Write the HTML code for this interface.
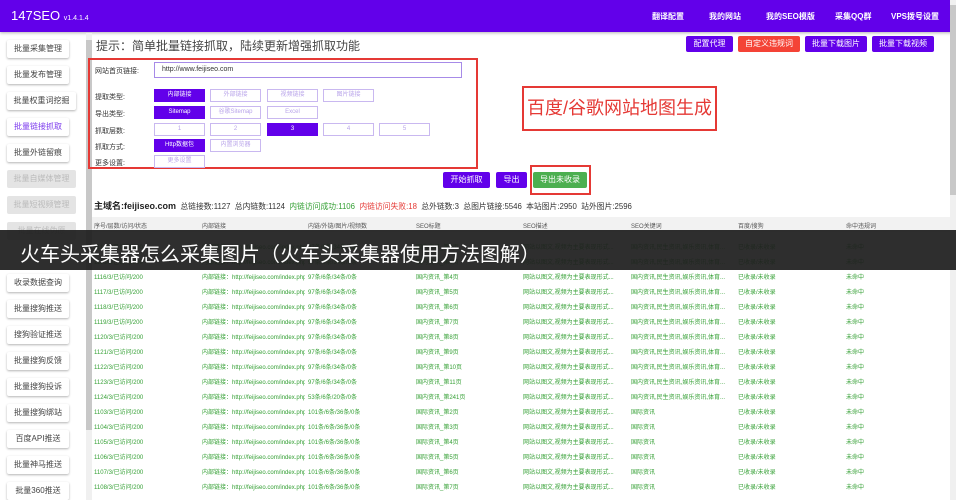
<!DOCTYPE html>
<html><head><meta charset="utf-8"><style>
*{margin:0;padding:0;box-sizing:border-box}
body{width:956px;height:500px;overflow:hidden;background:#fff;font-family:"Liberation Sans","Noto Sans CJK SC",sans-serif;position:relative;font-size:8px;color:#333}
.a{position:absolute}
.hdr{left:0;top:0;width:956px;height:32px;background:#6200ea;box-shadow:0 1px 3px rgba(0,0,0,.3)}
.nav{top:11px;color:#fff;font-size:8px;font-weight:bold}
.sb{left:7px;width:62px;height:18px;background:#fff;box-shadow:0 1px 2px rgba(0,0,0,.3);border-radius:2px;text-align:center;line-height:18px;font-size:8px;color:#444}
.sb.d{background:#e4e4e4;color:#bbb;box-shadow:none}
.tb{top:36px;height:16px;background:#6200ea;color:#fff;font-size:8px;text-align:center;line-height:16px;border-radius:2px}
.lb{left:95px;font-size:7px;color:#333}
.ob{height:13px;width:51px;border:1px solid #c9b8f0;color:#b9a4ea;font-size:6px;text-align:center;line-height:11px;background:#fff}
.ob.on{background:#6200ea;color:#fff;border-color:#6200ea}
.row{left:94px;width:850px;font-size:6px;color:#35a035;height:15px;line-height:15px;white-space:nowrap}
.row span{position:absolute;top:0;max-width:100px;overflow:hidden}
</style></head><body>
<div class="a hdr"></div>
<div class="a" style="left:11px;top:8px;color:#fff;font-size:13px">147SEO <span style="font-size:7px">v1.4.1.4</span></div>
<div class="a nav" style="left:652px">翻译配置</div>
<div class="a nav" style="left:709px">我的网站</div>
<div class="a nav" style="left:766px">我的SEO模版</div>
<div class="a nav" style="left:835px">采集QQ群</div>
<div class="a nav" style="left:891px">VPS拨号设置</div>

<div class="a" style="left:86px;top:33px;width:6px;height:467px;background:#f0f0f0"></div>
<div class="a" style="left:86px;top:40px;width:6px;height:390px;background:#c8c8c8"></div>
<div class="a" style="left:950px;top:0;width:6px;height:500px;background:#f0f0f0"></div>
<div class="a" style="left:950px;top:5px;width:6px;height:190px;background:#c8c8c8"></div>

<div class="a sb" style="top:40px">批量采集管理</div>
<div class="a sb" style="top:66px">批量发布管理</div>
<div class="a sb" style="top:92px;width:69px">批量权重词挖掘</div>
<div class="a sb" style="top:118px;color:#7c3aed">批量链接抓取</div>
<div class="a sb" style="top:144px">批量外链留痕</div>
<div class="a sb d" style="top:170px;width:69px">批量自媒体管理</div>
<div class="a sb d" style="top:196px;width:69px">批量短视频管理</div>
<div class="a sb d" style="top:222px;width:69px">批量在线伪原</div>
<div class="a sb" style="top:274px">收录数据查询</div>
<div class="a sb" style="top:300px">批量搜狗推送</div>
<div class="a sb" style="top:326px">搜狗验证推送</div>
<div class="a sb" style="top:352px">批量搜狗反馈</div>
<div class="a sb" style="top:378px">批量搜狗投诉</div>
<div class="a sb" style="top:404px">批量搜狗绑站</div>
<div class="a sb" style="top:430px">百度API推送</div>
<div class="a sb" style="top:456px">批量神马推送</div>
<div class="a sb" style="top:482px">批量360推送</div>

<div class="a" style="left:96px;top:37px;font-size:12px;color:#444">提示：简单批量链接抓取，陆续更新增强抓取功能</div>
<div class="a tb" style="left:686px;width:47px">配置代理</div>
<div class="a tb" style="left:738px;width:62px;background:#f44336">自定义违规词</div>
<div class="a tb" style="left:805px;width:62px">批量下载图片</div>
<div class="a tb" style="left:872px;width:62px">批量下载视频</div>

<div class="a" style="left:88px;top:58px;width:390px;height:111px;border:2px solid #e53935"></div>
<div class="a lb" style="top:66px">网站首页链接:</div>
<div class="a" style="left:154px;top:62px;width:308px;height:16px;border:1px solid #a78be8;font-size:7px;line-height:14px;padding-left:7px">http://www.feijiseo.com</div>
<div class="a lb" style="top:92px">提取类型:</div>
<div class="a lb" style="top:109px">导出类型:</div>
<div class="a lb" style="top:126px">抓取层数:</div>
<div class="a lb" style="top:142px">抓取方式:</div>
<div class="a lb" style="top:158px">更多设置:</div>
<div class="a ob on" style="left:154px;top:89px">内部链接</div>
<div class="a ob" style="left:210px;top:89px">外部链接</div>
<div class="a ob" style="left:267px;top:89px">视频链接</div>
<div class="a ob" style="left:323px;top:89px">图片链接</div>
<div class="a ob on" style="left:154px;top:106px">Sitemap</div>
<div class="a ob" style="left:210px;top:106px">谷歌Sitemap</div>
<div class="a ob" style="left:267px;top:106px">Excel</div>
<div class="a ob" style="left:154px;top:123px">1</div>
<div class="a ob" style="left:210px;top:123px">2</div>
<div class="a ob on" style="left:267px;top:123px">3</div>
<div class="a ob" style="left:323px;top:123px">4</div>
<div class="a ob" style="left:379px;top:123px">5</div>
<div class="a ob on" style="left:154px;top:139px">Http数据包</div>
<div class="a ob" style="left:210px;top:139px">内置浏览器</div>
<div class="a ob" style="left:154px;top:155px">更多设置</div>

<div class="a" style="left:522px;top:86px;width:195px;height:45px;border:2px solid #e53935;color:#e53935;font-size:18px;text-align:center;line-height:41px">百度/谷歌网站地图生成</div>

<div class="a tb" style="left:443px;top:172px;width:47px">开始抓取</div>
<div class="a tb" style="left:496px;top:172px;width:31px">导出</div>
<div class="a" style="left:530px;top:165px;width:61px;height:30px;border:2px solid #e53935"></div>
<div class="a tb" style="left:533px;top:172px;width:54px;background:#4caf50">导出未收录</div>

<div class="a" style="left:94px;top:199px;font-size:7.8px;white-space:nowrap"><b style="font-size:9px;color:#222">主域名:feijiseo.com</b>&nbsp; 总链接数:1127&nbsp; 总内链数:1124&nbsp; <span style="color:#35a035">内链访问成功:1106</span>&nbsp; <span style="color:#e53935">内链访问失败:18</span>&nbsp; 总外链数:3&nbsp; 总图片链接:5546&nbsp; 本站图片:2950&nbsp; 站外图片:2596</div>

<div class="a" style="left:92px;top:217px;width:858px;height:15px;background:#f2f2f2"></div>
<div class="a row" style="top:220px;color:#555"><span style="left:0">序号/层数/访问/状态</span><span style="left:108px">内部链接</span><span style="left:214px">内链/外链/图片/视频数</span><span style="left:322px">SEO标题</span><span style="left:429px">SEO描述</span><span style="left:537px">SEO关键词</span><span style="left:644px">百度/搜狗</span><span style="left:752px">命中违规词</span></div>

<div id="rows"></div>
<script>
var d=[["1114","97条/6条/34条/0条","国内资讯_第2页",1],["1115","97条/6条/34条/0条","国内资讯_第3页",1],["1116","97条/6条/34条/0条","国内资讯_第4页",1],["1117","97条/6条/34条/0条","国内资讯_第5页",1],["1118","97条/6条/34条/0条","国内资讯_第6页",1],["1119","97条/6条/34条/0条","国内资讯_第7页",1],["1120","97条/6条/34条/0条","国内资讯_第8页",1],["1121","97条/6条/34条/0条","国内资讯_第9页",1],["1122","97条/6条/34条/0条","国内资讯_第10页",1],["1123","97条/6条/34条/0条","国内资讯_第11页",1],["1124","53条/6条/20条/0条","国内资讯_第241页",1],["1103","101条/6条/36条/0条","国际资讯_第2页",0],["1104","101条/6条/36条/0条","国际资讯_第3页",0],["1105","101条/6条/36条/0条","国际资讯_第4页",0],["1106","101条/6条/36条/0条","国际资讯_第5页",0],["1107","101条/6条/36条/0条","国际资讯_第6页",0],["1108","101条/6条/36条/0条","国际资讯_第7页",0]];
var h="";d.forEach(function(r,i){h+='<div class="a row" style="top:'+(241+i*15)+'px"><span style="left:0">'+r[0]+'/3/已访问/200</span><span style="left:108px;max-width:103px">内部链接：http://feijiseo.com/index.php</span><span style="left:214px">'+r[1]+'</span><span style="left:322px">'+r[2]+'</span><span style="left:429px;max-width:92px">网站以图文,视频为主要表现形式...</span><span style="left:537px;max-width:94px">'+(r[3]?'国内资讯,民生资讯,娱乐资讯,体育...':'国际资讯')+'</span><span style="left:644px">已收录/未收录</span><span style="left:752px">未命中</span></div>'});
document.getElementById("rows").innerHTML=h;
</script>

<div class="a" style="left:0;top:230px;width:956px;height:40px;background:rgba(30,30,30,.93)"></div>
<div class="a" style="left:20px;top:238px;color:#fff;font-size:20px;white-space:nowrap">火车头采集器怎么采集图片（火车头采集器使用方法图解）</div>
</body></html>
